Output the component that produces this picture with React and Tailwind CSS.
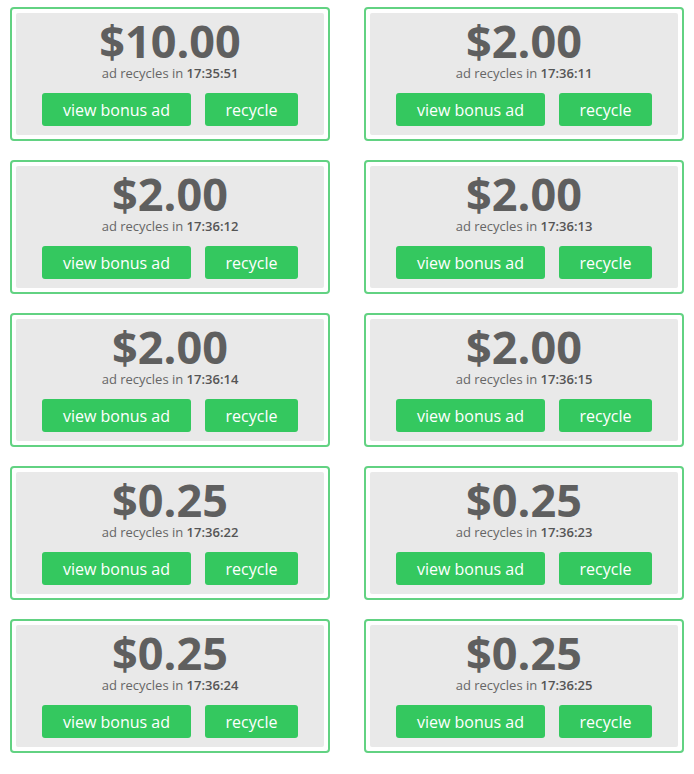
import React from 'react';

const ads = [
  { amount: '$10.00', time: '17:35:51' },
  { amount: '$2.00', time: '17:36:11' },
  { amount: '$2.00', time: '17:36:12' },
  { amount: '$2.00', time: '17:36:13' },
  { amount: '$2.00', time: '17:36:14' },
  { amount: '$2.00', time: '17:36:15' },
  { amount: '$0.25', time: '17:36:22' },
  { amount: '$0.25', time: '17:36:23' },
  { amount: '$0.25', time: '17:36:24' },
  { amount: '$0.25', time: '17:36:25' },
];

const AdCard = ({ amount, time }) => (
  <div className="h-[134px] rounded-[4px] border-2 border-[#62d282] bg-white p-[4px]">
    <div className="flex h-full flex-col items-center rounded-[2px] bg-[#e9e9e9]">
      <div className="mt-[8px] text-[45px] font-bold leading-[40px] text-[#5f5f5f]">
        {amount}
      </div>
      <div className="mt-[3px] text-[13px] leading-[18px] text-[#666666]">
        ad recycles in <span className="font-semibold text-[#555555]">{time}</span>
      </div>
      <div className="mt-[11px] flex gap-[14px]">
        <button className="h-[33px] w-[149px] rounded-[3px] bg-[#34c85f] text-[16px] text-white">
          view bonus ad
        </button>
        <button className="h-[33px] w-[93px] rounded-[3px] bg-[#34c85f] text-[16px] text-white">
          recycle
        </button>
      </div>
    </div>
  </div>
);

const App = () => {
  return (
    <div className="min-h-[774px] bg-white px-[10px] pt-[7px]" style={{ fontFamily: '"Open Sans", sans-serif' }}>
      <div className="grid grid-cols-2 gap-x-[34px] gap-y-[19px]">
        {ads.map((ad, i) => (
          <AdCard key={i} amount={ad.amount} time={ad.time} />
        ))}
      </div>
    </div>
  );
};

export default App;
